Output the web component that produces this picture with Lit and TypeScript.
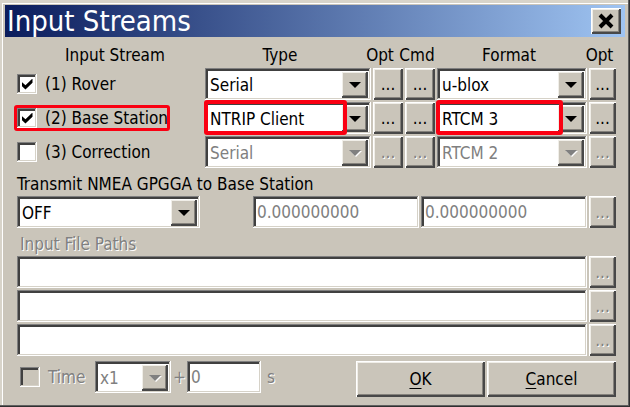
import { LitElement, html, css, svg } from "lit";
import { customElement, property } from "lit/decorators.js";
import { classMap } from "lit/directives/class-map.js";

const base = css`
  * { box-sizing: border-box; }
  button, input, select {
    margin: 0;
    border-radius: 0;
    font: inherit;
    color: #000;
  }
  .push {
    display: flex;
    align-items: center;
    justify-content: center;
    height: 32px;
    padding: 0;
    background: #cac5ba;
    border: 0;
    box-shadow: inset 1px 1px #fff, inset -2px -2px #484848, inset 2px 2px #f0eee8, inset -3px -3px #85827c;
  }
  .push:disabled { color: #808080; text-shadow: 1px 1px #fff; }
  .sunken {
    background: #fff;
    border: 0;
    box-shadow: inset -1px -1px #fff, inset 1px 1px #808080, inset -2px -2px #d6d2c8, inset 3px 3px #404040;
  }
`;

@customElement("combo-box")
export class ComboBox extends LitElement {
  @property() value = "";
  @property() label = "";
  @property({ type: Boolean }) disabled = false;
  @property({ type: Boolean }) marked = false;

  static styles = [base, css`
    :host { display: block; position: relative; min-width: 0; }
    select {
      appearance: none;
      display: block;
      width: 100%;
      height: 32px;
      padding: 2px 32px 0 5px;
      outline: 0;
    }
    select:disabled { color: #808080; opacity: 1; }
    .drop {
      position: absolute;
      top: 3px;
      right: 3px;
      width: 27px;
      height: 27px;
      pointer-events: none;
    }
    .mark {
      position: absolute;
      inset: -2px 24px -1px -1px;
      border: 4px solid #fa0012;
      border-radius: 3px;
      pointer-events: none;
    }
  `];

  render() {
    return html`
      <select class="sunken" aria-label=${this.label} ?disabled=${this.disabled}>
        <option>${this.value}</option>
      </select>
      <span class="push drop">
        <svg width="14" height="10" viewBox="0 0 14 10" aria-hidden="true">
          ${this.disabled ? svg`<path d="M2 3h12L8 9z" fill="#fff" />` : ""}
          <path d="M1 2h12L7 8z" fill=${this.disabled ? "#808080" : "#000"} />
        </svg>
      </span>
      ${this.marked ? html`<span class="mark"></span>` : ""}
    `;
  }
}

interface Stream {
  name: string;
  on: boolean;
  type: string;
  format: string;
  marked?: boolean;
}

const streams: Stream[] = [
  { name: "(1) Rover", on: true, type: "Serial", format: "u-blox" },
  { name: "(2) Base Station", on: true, type: "NTRIP Client", format: "RTCM 3", marked: true },
  { name: "(3) Correction", on: false, type: "Serial", format: "RTCM 2" },
];

@customElement("app-root")
export class AppRoot extends LitElement {
  static styles = [base, css`
    :host {
      display: block;
      font: 17px/20px "DejaVu Sans Condensed", "DejaVu Sans", sans-serif;
      color: #000;
    }
    .window {
      padding: 5px 5px 10px;
      background: #cac5ba;
      box-shadow: inset -1px -1px #303030, inset -2px -2px #606060, inset 2px 3px #d8d4ca, inset 3px 4px #fff;
    }
    .title {
      display: flex;
      align-items: center;
      justify-content: space-between;
      height: 32px;
      padding: 0 4px 0 2px;
      background: linear-gradient(90deg, #0a1c5c, #9fc4f2);
    }
    h1 { margin: 0; font-size: 29px; line-height: 32px; font-weight: 400; color: #fff; }
    .close { width: 30px; height: 26px; }
    .body { padding: 8px 9px 0 12px; }
    .streams {
      display: grid;
      grid-template-columns: 186fr 166fr 30px 30px 150fr 27px;
      gap: 2px;
    }
    .head {
      display: flex;
      justify-content: center;
      height: 21px;
      min-width: 0;
      padding-right: 6px;
      white-space: nowrap;
    }
    .head.first { padding: 0 0 0 10px; }
    .head.left { padding-right: 16px; }
    .check { display: flex; align-items: center; gap: 8px; position: relative; white-space: nowrap; }
    .box {
      appearance: none;
      flex: none;
      width: 20px;
      height: 20px;
      display: grid;
      place-items: center;
    }
    .box:checked::before {
      content: "";
      width: 11px;
      height: 11px;
      background: #000;
      clip-path: polygon(0 30%, 36% 62%, 100% 0, 100% 38%, 36% 100%, 0 66%);
    }
    .box:disabled { background: #cac5ba; }
    .mark {
      position: absolute;
      inset: 3px 33px 3px -3px;
      border: 3px solid #fa0012;
      border-radius: 3px;
      pointer-events: none;
    }
    .caption { display: block; padding: 6px 0 2px; }
    .dim { color: #808080; text-shadow: 1px 1px #fff; }
    .row { display: flex; gap: 2px; }
    .send { width: 183px; margin-right: auto; }
    .field { height: 32px; min-width: 0; padding: 0 4px; outline: 0; }
    .field:disabled { color: #808080; }
    .coord { width: 166px; }
    .more { width: 27px; }
    .inset { padding-left: 3px; }
    .files { display: grid; gap: 2px; }
    .path { flex: 1; }
    .bottom { align-items: flex-start; margin-top: 5px; padding-left: 3px; }
    .bottom .check { height: 32px; width: 73px; }
    .rate { width: 76px; }
    .plus, .unit { line-height: 32px; }
    .plus { width: 12px; }
    .offset { width: 74px; }
    .unit { margin-left: 4px; margin-right: auto; }
    .action { width: 129px; height: 36px; }
    .action u { text-underline-offset: 3px; }
  `];

  render() {
    return html`
      <main class="window">
        <header class="title">
          <h1>Input Streams</h1>
          <button class="push close" aria-label="Close">
            <svg width="18" height="16" viewBox="0 0 18 16" aria-hidden="true">
              <path d="M3 2l12 12M15 2L3 14" stroke="#000" stroke-width="4" />
            </svg>
          </button>
        </header>
        <div class="body">
          <section class="streams">
            <span class="head first">Input Stream</span>
            <span class="head left">Type</span>
            <span class="head left">Opt</span>
            <span class="head">Cmd</span>
            <span class="head">Format</span>
            <span class="head">Opt</span>
            ${streams.map((s) => html`
              <label class="check">
                <input class="box sunken" type="checkbox" .checked=${s.on} />
                ${s.name}
                ${s.marked ? html`<span class="mark"></span>` : ""}
              </label>
              <combo-box label="Type" .value=${s.type} ?disabled=${!s.on} ?marked=${s.marked}></combo-box>
              <button class="push" ?disabled=${!s.on}>...</button>
              <button class="push" ?disabled=${!s.on}>...</button>
              <combo-box label="Format" .value=${s.format} ?disabled=${!s.on} ?marked=${s.marked}></combo-box>
              <button class="push" ?disabled=${!s.on}>...</button>
            `)}
          </section>

          <span class="caption">Transmit NMEA GPGGA to Base Station</span>
          <div class="row">
            <combo-box class="send" label="Transmit NMEA GPGGA to Base Station" value="OFF"></combo-box>
            <input class="sunken field coord" aria-label="Latitude" value="0.000000000" disabled />
            <input class="sunken field coord" aria-label="Longitude" value="0.000000000" disabled />
            <button class="push more" disabled>...</button>
          </div>

          <span class=${classMap({ caption: true, dim: true, inset: true })}>Input File Paths</span>
          <div class="files">
            ${[1, 2, 3].map((n) => html`
              <div class="row">
                <input class="sunken field path" aria-label="Input file ${n}" disabled />
                <button class="push more" disabled>...</button>
              </div>
            `)}
          </div>

          <div class="row bottom">
            <label class="check dim">
              <input class="box sunken" type="checkbox" disabled />
              Time
            </label>
            <combo-box class="rate" label="Rate" value="x1" disabled></combo-box>
            <span class="plus dim">+</span>
            <input class="sunken field offset" aria-label="Offset" value="0" disabled />
            <span class="unit dim">s</span>
            <button class="push action"><span><u>O</u>K</span></button>
            <button class="push action"><span><u>C</u>ancel</span></button>
          </div>
        </div>
      </main>
    `;
  }
}
